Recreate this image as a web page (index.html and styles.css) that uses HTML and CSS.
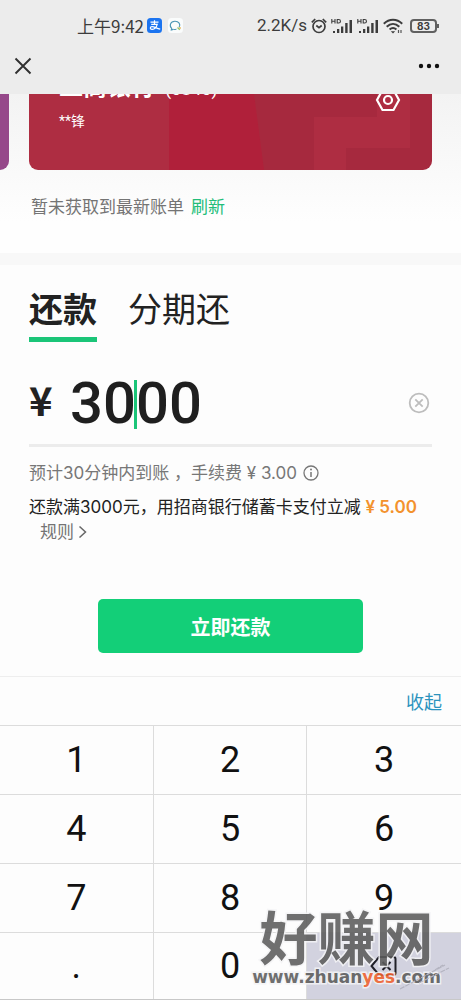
FILE: index.html
```html
<!DOCTYPE html>
<html lang="zh-CN">
<head>
<meta charset="utf-8">
<meta name="viewport" content="width=device-width, initial-scale=1">
<title>还款</title>
<link rel="stylesheet" href="styles.css">
</head>
<body>
<div class="page">
  <header class="top">
    <div class="status">
      <div class="status-left">
        <span>上午9:42</span>
        <svg width="15" height="15" viewBox="0 0 15 15"><rect width="15" height="15" rx="3.5" fill="#1b74f0"/><path d="M3.5 4.2h8M7.5 2.3v4M4.2 6.3h6c-.7 2.6-2.5 4.800-5 5.100-2.300.2-2.600-2.500-.4-2.800 2.300-.2 4.400 1.700 8.400 2.500" fill="none" stroke="#fff" stroke-width="1.200"/></svg>
        <svg width="15" height="15" viewBox="0 0 15 15"><rect width="15" height="15" rx="3.500" fill="#fafcfc"/><path d="M5.300 11.400 3.300 12l.4-1.700C1 7.800 2.300 3.400 6.800 3.200c4-.1 6.200 3.200 4.300 6" fill="none" stroke="#4b96b5" stroke-width="1.100"/><path d="M5.300 11.400c1.100.3 2.300.2 3.200-.2" fill="none" stroke="#4b96b5"/><path d="M9.500 9.500l2.300 2.300" stroke="#8ec66b" stroke-width="1.300"/><circle cx="12" cy="10" r=".9" fill="#e8b75d"/></svg>
      </div>
      <div class="status-right">
        <span>2.2K/s</span>
        <svg width="16" height="16" viewBox="0 0 16 16" fill="none" stroke="#3c3c3c" stroke-width="1.700"><circle cx="8" cy="8.500" r="6"/><path d="M.8 4.300 4.200 1M15.200 4.300 11.800 1M5.300 7.500 8 9.700l2.700-2.200"/></svg>
        <svg width="22" height="16" viewBox="0 0 22 16"><path d="M.8 1v4.500M4 1v4.500M.8 3.200H4M6.200 1.500h1.400c2.500 0 2.500 3.500 0 3.500H6.200z" fill="none" stroke="#3c3c3c" stroke-width="1.100"/><path d="M2 13h2v2H2zM6 11h2.300v4H6zM10 8.500h2.300V15H10zM14.200 5h2.400v10h-2.400zM18.500 2H21v13h-2.500z" fill="#3c3c3c"/></svg>
        <svg width="22" height="16" viewBox="0 0 22 16"><path d="M.8 1v4.500M4 1v4.500M.8 3.200H4M6.200 1.500h1.400c2.500 0 2.500 3.500 0 3.500H6.200z" fill="none" stroke="#3c3c3c" stroke-width="1.100"/><path d="M2 13h2v2H2zM6 11h2.300v4H6zM10 8.500h2.300V15H10zM14.200 5h2.400v10h-2.400zM18.500 2H21v13h-2.500z" fill="#3c3c3c"/></svg>
        <svg width="20" height="16" viewBox="0 0 20 16"><path d="M.8 5.800c5.400-5.300 13-5.300 18.400 0M3.700 8.800c3.900-3.800 8.700-3.800 12.600 0M6.600 11.600c2.200-2 4.600-2 6.800 0" fill="none" stroke="#3c3c3c" stroke-width="2"/><path d="M7.800 13.200h4.400L10 15.500z" fill="#3c3c3c"/><path d="M15.500 15v-3M18 12v3" stroke="#555" stroke-width="1.200"/></svg>
        <span class="battery">83</span>
      </div>
    </div>
    <nav class="nav">
      <button class="icon-btn" aria-label="关闭"><svg width="18" height="18" viewBox="0 0 18 18"><path d="M1.500 1.500l15 15M16.500 1.500l-15 15" stroke="#303030" stroke-width="1.900" fill="none"/></svg></button>
      <button class="icon-btn" aria-label="更多"><svg width="22" height="6" viewBox="0 0 22 6" fill="#111"><circle cx="3" cy="3" r="2.200"/><circle cx="11" cy="3" r="2.200"/><circle cx="19" cy="3" r="2.200"/></svg></button>
    </nav>
  </header>

  <section class="cards">
    <div class="card-row">
      <div class="card-prev"></div>
      <div class="card">
        <svg class="card-art" viewBox="0 0 403 76" preserveAspectRatio="none"><path d="M0 0h141v76H0z" fill="#ae2d42"/><path d="M140 0h86l10 76h-96z" fill="#b0203a"/><path d="M225 0h178v76H235z" fill="#a6293e"/><path d="M285 23h63V0h33v54h-64v22h-32z" fill="#ae2d42"/></svg>
        <div class="card-text">
          <div class="bank">工商银行 <span class="bank-no">(0840)</span></div>
          <div class="holder">**锋</div>
        </div>
        <button class="icon-btn card-set" aria-label="卡片设置"><svg width="26" height="24" viewBox="0 0 26 24" fill="none" stroke="#fff" stroke-width="2.200"><path d="M7.500 2h11l5.500 10-5.500 10h-11L2 12z"/><circle cx="13" cy="12" r="4"/></svg></button>
      </div>
      <div class="card-next"></div>
    </div>
    <p class="bill"><span>暂未获取到最新账单</span><a href="#">刷新</a></p>
  </section>

  <main class="pay">
    <div class="tabs" role="tablist">
      <button class="tab active" role="tab" aria-selected="true">还款</button>
      <button class="tab" role="tab" aria-selected="false">分期还</button>
    </div>
    <div class="amount">
      <label class="yen" for="amount">¥</label>
      <div class="field">
        <input id="amount" type="text" inputmode="none" value="3000">
        <span class="caret"></span>
      </div>
      <button class="icon-btn" aria-label="清除"><svg width="22" height="22" viewBox="0 0 22 22" fill="none" stroke="#bdbdbd" stroke-width="1.800"><circle cx="11" cy="11" r="9.300"/><path d="M7.300 7.300l7.400 7.400M14.700 7.300l-7.400 7.400"/></svg></button>
    </div>
    <div class="fee">
      <span>预计30分钟内到账 ，手续费 ¥ 3.00</span>
      <svg width="16" height="16" viewBox="0 0 16 16"><circle cx="8" cy="8" r="7" fill="none" stroke="#777" stroke-width="1.300"/><path d="M8 7v5" stroke="#777" stroke-width="1.500"/><circle cx="8" cy="4.600" r="1" fill="#777"/></svg>
    </div>
    <div class="promo">还款满3000元，用招商银行储蓄卡支付立减 <b>¥ 5.00</b></div>
    <a class="rules" href="#">规则<svg width="9" height="14" viewBox="0 0 9 14"><path d="M1.500 1.500 7.500 7l-6 5.500" fill="none" stroke="#666" stroke-width="1.500"/></svg></a>
    <button class="submit">立即还款</button>
  </main>

  <section class="keyboard">
    <div class="kb-bar"><button class="collapse">收起</button></div>
    <div class="keys">
      <button>1</button><button>2</button><button>3</button>
      <button>4</button><button>5</button><button>6</button>
      <button>7</button><button>8</button><button>9</button>
      <button>.</button><button>0</button>
      <button class="del" aria-label="删除"><svg width="28" height="22" viewBox="0 0 28 22" fill="none" stroke="#202028" stroke-width="2"><path d="M9 2h14.500q2 0 2 2v14q0 2-2 2H9L1.500 11zM12.500 7l8 8M20.500 7l-8 8"/></svg></button>
    </div>
    <div class="mark">
      <div class="mark-name">好赚网</div>
      <div class="mark-url">www.zhuan<span>yes</span>.com</div>
    </div>
    <svg class="scratch" width="52" height="30" viewBox="0 0 52 30" stroke="#b4b4c0" fill="none"><path d="M1 27 46 3M20 21l30-15M36 8l8-5" stroke-width="1.200" stroke-dasharray="5 1"/></svg>
  </section>
</div>
</body>
</html>
```
FILE: styles.css
```css
* { box-sizing: border-box; }
body {
  margin: 0;
  background: #fdfdfd;
  color: #222;
  font-family: Roboto, "Noto Sans CJK SC", sans-serif;
}
button {
  margin: 0;
  padding: 0;
  border: 0;
  background: none;
  color: inherit;
  font: inherit;
}
a { text-decoration: none; }
svg { display: block; flex: none; }
.page {
  min-height: 100vh;
  display: flex;
  flex-direction: column;
  overflow: hidden;
}

/* status bar and navigation */
.top { background: #ececec; padding-top: 13px; }
.status {
  display: flex;
  justify-content: space-between;
  height: 25px;
  padding: 0 21px 0 77px;
  color: #3c3c3c;
  font-size: 17px;
  line-height: 25px;
}
.status-left, .status-right { display: flex; align-items: center; }
.status-left { gap: 6px; }
.status-left span { font: 17px/25px "Noto Sans CJK SC", sans-serif; margin-right: -3px; }
.status-right { gap: 4px; }
.battery {
  position: relative;
  width: 27px;
  height: 14px;
  margin: 0 3px;
  border: 2px solid #606060;
  border-radius: 4px;
  font: bold 10px/10px Inter, sans-serif;
  text-align: center;
}
.battery::after {
  content: "";
  position: absolute;
  right: -4px;
  top: 3px;
  width: 2px;
  height: 4px;
  background: #606060;
}
.nav {
  display: flex;
  justify-content: space-between;
  align-items: center;
  height: 56px;
  padding: 0 21px 0 14px;
}

/* bank cards */
.cards {
  height: 159px;
  background: linear-gradient(#f3f3f3, #fefefe 80%);
}
.card-row { display: flex; gap: 20px; height: 76px; }
.card-prev { width: 9px; background: #96488a; border-radius: 0 0 9px 0; }
.card-next { width: 9px; }
.card {
  position: relative;
  flex: 1;
  display: flex;
  justify-content: space-between;
  align-items: flex-end;
  padding: 0 31px 36px 30px;
  border-radius: 0 0 9px 9px;
  overflow: hidden;
  color: #fff;
}
.card-art { position: absolute; inset: 0; width: 100%; height: 100%; }
.card-text { position: relative; }
.bank { margin-bottom: 3px; font-weight: 700; font-size: 24px; line-height: 32px; }
.bank-no { margin-left: 4px; font-weight: 400; font-size: 18px; }
.holder { font-size: 14px; line-height: 26px; }
.card-set { position: relative; margin-bottom: 22px; }
.bill {
  display: flex;
  gap: 7px;
  margin: 25px 31px 0;
  color: #747474;
  font-size: 17px;
  line-height: 25px;
}
.bill a { color: #22bd79; }

/* repayment form */
.pay {
  flex: 1;
  padding: 22px 29px 0;
  border-top: 12px solid #f8f8f8;
}
.tabs { display: flex; gap: 31px; font-size: 34px; line-height: 46px; }
.tab { height: 55px; padding-bottom: 9px; }
.tab.active { font-weight: 700; border-bottom: 5px solid #1bc578; padding-bottom: 4px; }
.amount {
  display: flex;
  align-items: center;
  margin-top: 20px;
  height: 85px;
  padding-right: 2px;
  border-bottom: 3px solid #ececec;
}
.yen { width: 41px; padding-bottom: 8px; font: bold 40px/44px "Noto Sans CJK SC", sans-serif; }
.field { position: relative; flex: 1; min-width: 0; }
.field input {
  display: block;
  width: 100%;
  padding: 0;
  border: 0;
  outline: 0;
  background: none;
  color: #1f1f1f;
  font: 500 58px/72px Roboto, sans-serif;
}
.caret {
  position: absolute;
  left: 64px;
  top: 13px;
  width: 3px;
  height: 49px;
  background: #1bc578;
}
.fee, .promo { font-family: Inter, "Noto Sans CJK SC", sans-serif; }
.fee {
  display: flex;
  align-items: center;
  gap: 6px;
  margin-top: 13px;
  color: #777;
  font-size: 17px;
  line-height: 26px;
}
.promo { margin-top: 8px; font-size: 17px; line-height: 26px; white-space: nowrap; }
.promo b { color: #f3922d; font-weight: 600; }
.rules {
  display: flex;
  align-items: center;
  gap: 4px;
  padding-left: 11px;
  color: #747474;
  font-size: 17px;
  line-height: 24px;
}
.submit {
  display: block;
  width: 66%;
  height: 54px;
  margin: 55px auto 0;
  border-radius: 5px;
  background: #13cf78;
  color: #fff;
  font-size: 20px;
  font-weight: 700;
}

/* number keyboard */
.keyboard { position: relative; border-top: 1px solid #eee; }
.kb-bar { display: flex; justify-content: flex-end; height: 48px; padding-right: 19px; }
.collapse { color: #2c93bd; font-size: 18px; }
.keys {
  display: grid;
  grid-template-columns: repeat(3, 1fr);
  grid-template-rows: repeat(3, 69px) 67px;
  border-bottom: 1px solid #c8c8c8;
}
.keys button {
  border-top: 1px solid #dcdcdc;
  border-right: 1px solid #dcdcdc;
  color: #111;
  font-size: 36px;
}
.keys button:nth-child(3n) { border-right: 0; }
.keys .del {
  display: flex;
  align-items: center;
  justify-content: center;
  background: #d2d2df;
}

/* site mark over the keyboard */
.mark {
  position: absolute;
  right: 20px;
  bottom: 14px;
  color: #5c5c5c;
  font-weight: 700;
  text-align: center;
  paint-order: stroke fill;
  -webkit-text-stroke: 3px #f4f4f6;
  opacity: .88;
  pointer-events: none;
}
.mark-name { font-size: 58px; line-height: 56px; }
.mark-url { font: bold 17px/18px "DejaVu Sans", sans-serif; }
.mark-url span { color: #f0622e; }
.scratch { position: absolute; right: 10px; bottom: 8px; }
```
